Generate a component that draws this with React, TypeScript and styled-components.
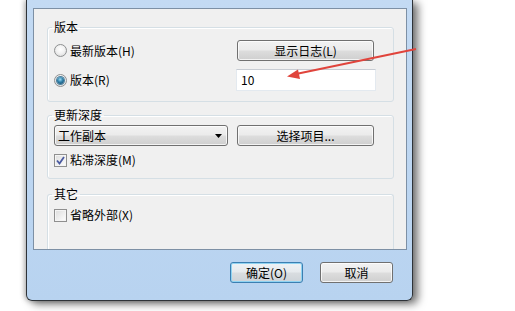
import React from 'react';
import styled, { createGlobalStyle, css } from 'styled-components';

const Global = createGlobalStyle`
  html, body { margin: 0; padding: 0; background: #ffffff; overflow: hidden; }
  body {
    font-family: "Noto Sans CJK SC", "Noto Sans", "Liberation Sans", sans-serif;
    font-size: 12px;
    color: #000;
  }
  * { box-sizing: border-box; }
`;

const Stage = styled.div`
  position: relative;
  width: 515px;
  height: 311px;
  overflow: hidden;
  padding-left: 26px;
`;

const Window = styled.div`
  width: 387px;
  height: 301px;
  border: 1px solid #2e3338;
  border-top: none;
  border-radius: 0 0 6px 6px;
  background: linear-gradient(#c3daf3, #b8d3f0);
  box-shadow: 5px 3px 9px rgba(0, 0, 0, 0.55), -2px 0 5px rgba(0, 0, 0, 0.25);
  padding: 8px 5px 0 6px;
  display: flex;
  flex-direction: column;
`;

const Panel = styled.div`
  height: 242px;
  border: 1px solid #7d90a5;
  background: #f0f0f0;
  padding: 10px 12px 0 13px;
  display: flex;
  flex-direction: column;
  overflow: hidden;
`;

const Group = styled.fieldset<{ $open?: boolean }>`
  margin: 0;
  min-width: 0;
  border: 1px solid #d5dfe5;
  border-radius: 3px;
  box-shadow: inset 1px 1px 0 #ffffff;
  padding: 0 18px 0 6px;
  display: flex;
  flex-direction: column;
  ${(p) =>
    p.$open &&
    css`
      flex: 1;
      border-bottom: none;
      border-radius: 3px 3px 0 0;
    `}
`;

const Legend = styled.legend`
  font-size: 12px;
  line-height: 16px;
  padding: 0 2px;
  margin-left: -2px;
`;

const Row = styled.div<{ $h: number; $mt?: number }>`
  display: flex;
  align-items: center;
  justify-content: space-between;
  height: ${(p) => p.$h}px;
  margin-top: ${(p) => p.$mt ?? 0}px;
`;

const Option = styled.label`
  display: flex;
  align-items: center;
  gap: 3px;
  line-height: 16px;
  white-space: nowrap;
`;

const RadioDot = styled.span<{ $on?: boolean }>`
  width: 13px;
  height: 13px;
  border-radius: 50%;
  border: 1px solid #8e9091;
  background: radial-gradient(circle at 50% 40%, #ffffff 0%, #f2f2f2 45%, #d4d4d4 100%);
  display: flex;
  align-items: center;
  justify-content: center;
  &::after {
    content: '';
    display: ${(p) => (p.$on ? 'block' : 'none')};
    width: 7px;
    height: 7px;
    border-radius: 50%;
    background: radial-gradient(circle at 45% 35%, #9fdcf5 0%, #2f7fa8 45%, #0d3c5c 100%);
    box-shadow: 0 0 0 1px #4c7f9c;
  }
`;

const CheckBox = styled.span`
  width: 13px;
  height: 13px;
  border: 1px solid #8f8f8f;
  background: linear-gradient(135deg, #dcdcdc 0%, #f4f4f4 70%, #ffffff 100%);
  box-shadow: inset 0 0 0 1px #f4f4f4;
  display: flex;
  align-items: center;
  justify-content: center;
`;

const Button = styled.button<{ $w: number; $default?: boolean }>`
  width: ${(p) => p.$w}px;
  height: 21px;
  padding: 0;
  font-family: inherit;
  font-size: 12px;
  line-height: 16px;
  color: #000;
  border: 1px solid #707070;
  border-radius: 3px;
  background: linear-gradient(#f2f2f2 0%, #ebebeb 48%, #dddddd 52%, #cfcfcf 100%);
  box-shadow: inset 0 0 0 1px rgba(255, 255, 255, 0.75);
  ${(p) =>
    p.$default &&
    css`
      border-color: #3c7fb1;
      box-shadow: inset 0 0 0 1px #8fd3f2;
      background: linear-gradient(#eef2f5 0%, #e6eaed 48%, #d9dde0 52%, #cdd3d8 100%);
    `}
`;

const TextInput = styled.div`
  width: 140px;
  height: 22px;
  margin-right: -1px;
  background: #ffffff;
  border: 1px solid #e3e9ef;
  border-top-color: #c7ccd3;
  padding-left: 4px;
  display: flex;
  align-items: center;
  line-height: 16px;
`;

const Combo = styled.div`
  width: 174px;
  height: 21px;
  border: 1px solid #707070;
  border-radius: 3px;
  background: linear-gradient(#f2f2f2 0%, #ebebeb 48%, #dddddd 52%, #cfcfcf 100%);
  box-shadow: inset 0 0 0 1px rgba(255, 255, 255, 0.75);
  display: flex;
  align-items: center;
  justify-content: space-between;
  padding: 0 5px 0 3px;
  line-height: 16px;
`;

const ComboRow = styled(Row)`
  justify-content: flex-start;
  gap: 9px;
`;

const BottomBar = styled.div`
  display: flex;
  justify-content: flex-end;
  gap: 17px;
  padding: 12px 14px 0 0;
`;

const Overlay = styled.svg`
  position: absolute;
  left: 0;
  top: 0;
  pointer-events: none;
`;

const Check = () => (
  <svg width="9" height="9" viewBox="0 0 9 9">
    <path d="M1 4.5 L3.5 7.5 L8 1" fill="none" stroke="#4a5aa0" strokeWidth="1.8" />
  </svg>
);

const Arrow = () => (
  <svg width="7" height="4" viewBox="0 0 7 4">
    <path d="M0 0 H7 L3.5 4 Z" fill="#000" />
  </svg>
);

export default function App() {
  return (
    <Stage>
      <Global />
      <Window>
        <Panel>
          <Group>
            <Legend>版本</Legend>
            <Row $h={21} $mt={5}>
              <Option>
                <RadioDot />
                最新版本(H)
              </Option>
              <Button $w={137} style={{ marginRight: 1 }}>
                显示日志(L)
              </Button>
            </Row>
            <Row $h={22} $mt={8}>
              <Option>
                <RadioDot $on />
                版本(R)
              </Option>
              <TextInput>10</TextInput>
            </Row>
            <Row $h={10} />
          </Group>
          <Group style={{ marginTop: 5 }}>
            <Legend>更新深度</Legend>
            <ComboRow $h={21} $mt={2}>
              <Combo>
                <span>工作副本</span>
                <Arrow />
              </Combo>
              <Button $w={137}>选择项目...</Button>
            </ComboRow>
            <Row $h={16} $mt={6}>
              <Option>
                <CheckBox>
                  <Check />
                </CheckBox>
                粘滞深度(M)
              </Option>
            </Row>
            <Row $h={10} />
          </Group>
          <Group $open style={{ marginTop: 7 }}>
            <Legend>其它</Legend>
            <Row $h={16} $mt={5}>
              <Option>
                <CheckBox />
                省略外部(X)
              </Option>
            </Row>
          </Group>
        </Panel>
        <BottomBar>
          <Button $w={73} $default>
            确定(O)
          </Button>
          <Button $w={73}>取消</Button>
        </BottomBar>
      </Window>
      <Overlay width="515" height="311" viewBox="0 0 515 311">
        <line x1="416" y1="49" x2="296" y2="74" stroke="#e0443c" strokeWidth="2" />
        <path d="M287 76.5 L298 69.5 L300 79 Z" fill="#e0443c" />
      </Overlay>
    </Stage>
  );
}
